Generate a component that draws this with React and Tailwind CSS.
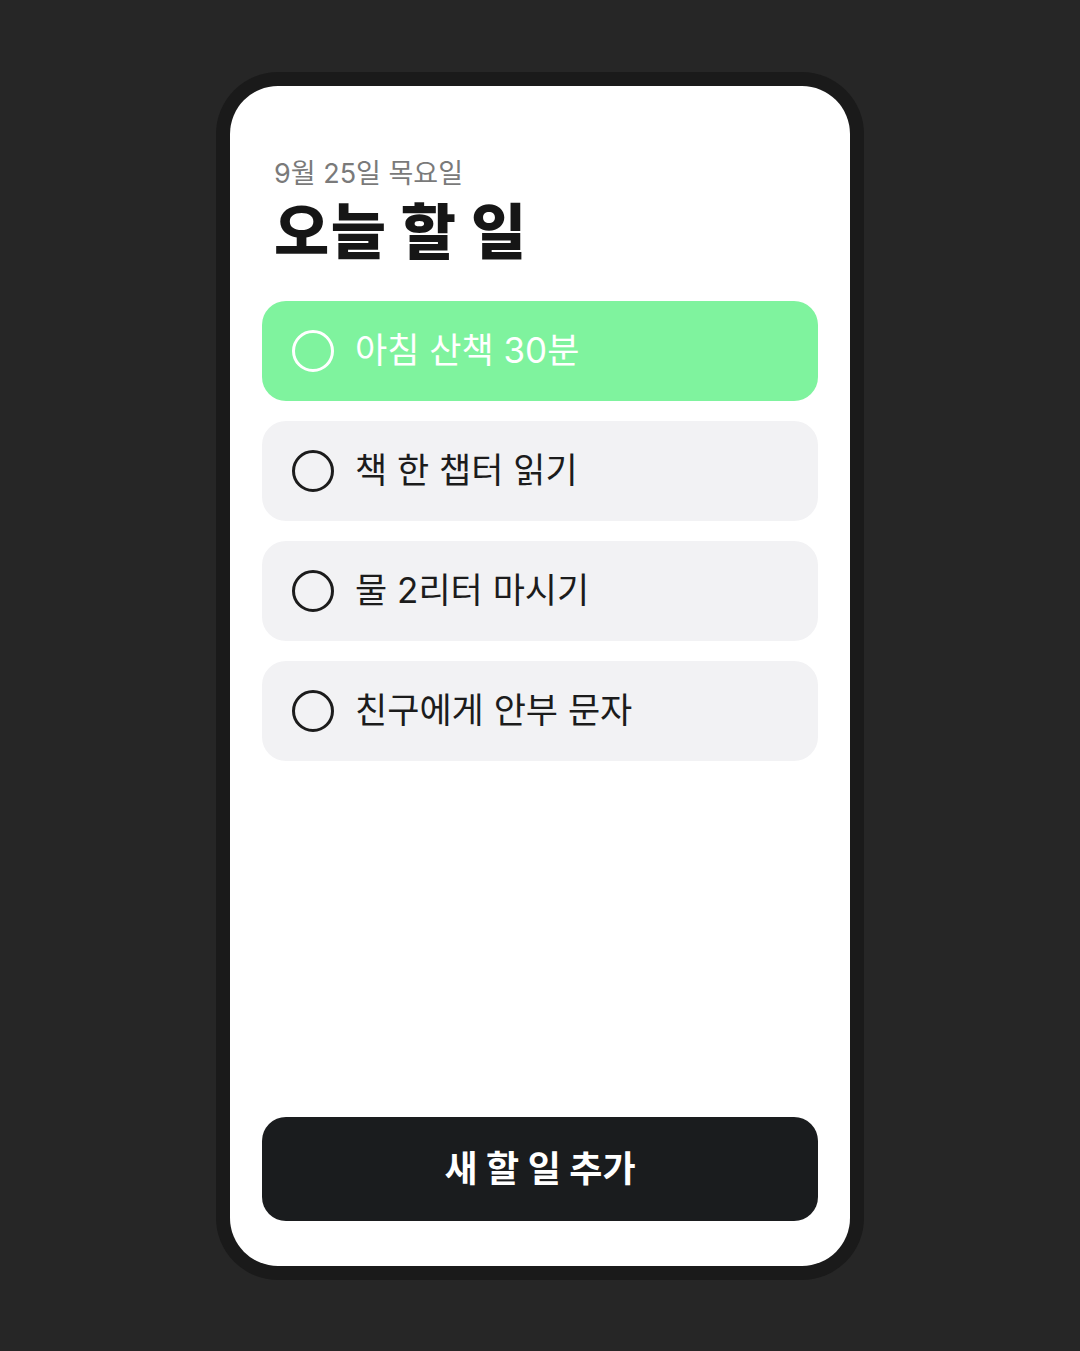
export default function App() {
  const items = [
    { text: "아침 산책 30분", active: true },
    { text: "책 한 챕터 읽기" },
    { text: "물 2리터 마시기" },
    { text: "친구에게 안부 문자" },
  ];
  return (
    <div
      className="w-full h-[1351px] bg-[#262626] flex items-center justify-center"
      style={{ fontFamily: '"Inter", "Noto Sans CJK KR", sans-serif' }}
    >
      <div className="w-[648px] h-[1208px] bg-[#1a1a1a] rounded-[62px] p-[14px]">
        <div className="w-full h-full bg-white rounded-[48px] px-[32px] pt-[71px] pb-[45px] flex flex-col">
          <div className="text-[27px] leading-[34px] text-[#7a7a7a] pl-[12px]">9월 25일 목요일</div>
          <div className="mt-[10px] text-[60px] leading-[62px] font-black tracking-[1.5px] text-[#161616] pl-[12px]">오늘 할 일</div>
          <div className="mt-[38px] flex flex-col gap-[20px]">
            {items.map((it, i) => (
              <div
                key={i}
                className={
                  "h-[100px] rounded-[24px] flex items-center px-[30px] gap-[21px] " +
                  (it.active ? "bg-[#7ff39e] text-white" : "bg-[#f2f2f4] text-[#1c1c1c]")
                }
              >
                <div
                  className={
                    "w-[42px] h-[42px] rounded-full border-[3.5px] shrink-0 " +
                    (it.active ? "border-white" : "border-[#1c1c1c]")
                  }
                />
                <span className="text-[35px] leading-none">{it.text}</span>
              </div>
            ))}
          </div>
          <div className="mt-auto h-[104px] rounded-[24px] bg-[#1a1c1e] flex items-center justify-center">
            <span className="text-[36px] font-bold text-white leading-none">새 할 일 추가</span>
          </div>
        </div>
      </div>
    </div>
  );
}
